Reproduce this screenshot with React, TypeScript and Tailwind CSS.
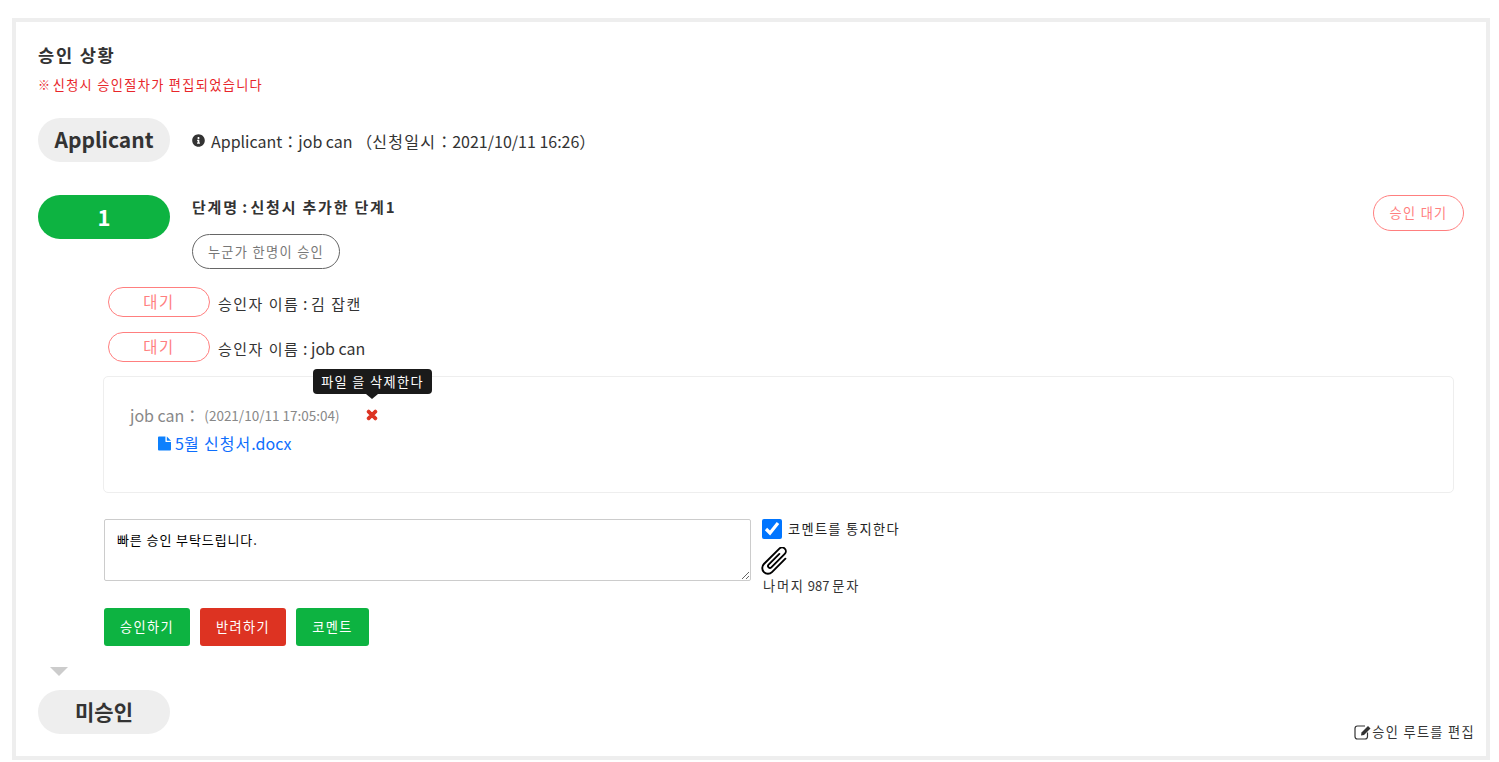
import { FaInfoCircle, FaTimes } from 'react-icons/fa'

const FONT = '[font-family:"Noto_Sans_CJK_KR","Noto_Sans",sans-serif]'

// hangul in the shot is drawn wider than latin, so hangul runs get their own size and spacing
function Ko({ text, className = 'text-[1.1em] tracking-[0.1em]' }: { text: string; className?: string }) {
  return (
    <>
      {text.split(/([가-힣]+(?:\s+[가-힣]+)*)/).map((part, i) =>
        i % 2 === 1 ? <span key={i} className={className}>{part}</span> : part
      )}
    </>
  )
}

function Approver({ name, last }: { name: string; last?: boolean }) {
  return (
    <div className={`flex items-start ${last ? 'h-[37px]' : 'h-[45px]'}`}>
      <span className="flex h-[30px] w-[102px] items-center justify-center rounded-[15px] border border-[#ff7f7f] pb-[2px] text-sm text-[#ff7f7f]">
        <Ko text="대기" />
      </span>
      <span className="ml-[8px] mt-[4px] text-base leading-[24px] text-[#333]">
        <Ko text="승인자 이름" className="text-[15px] tracking-[0.1em]" /> : <Ko text={name} className="text-[15px] tracking-[0.1em]" />
      </span>
    </div>
  )
}

function ClipIcon() {
  return (
    <svg viewBox="0 0 30 28" className="ml-[-2px] mt-[8px] h-[28px] w-[30px]">
      <g transform="translate(15 14) rotate(45) scale(0.95) translate(-6 -17.5)" fill="none" stroke="#000" strokeWidth={2} strokeLinecap="round">
        <path d="M12 8 V28 a6 6 0 0 1 -12 0 V5 a4 4 0 0 1 8 0 V25 a2 2 0 0 1 -4 0 V9" />
      </g>
    </svg>
  )
}

function EditIcon() {
  return (
    <svg viewBox="0 0 18 16" className="h-[16px] w-[18px]">
      <path d="M11 2 H3.5 Q1 2 1 4.5 V12.5 Q1 15 3.5 15 H11 Q13.5 15 13.5 12.5 V8.5" fill="none" stroke="#333" strokeWidth={1.2} />
      <path d="M7.5 8.5 L14 2 L16.5 4.5 L10 11 L7 11.5 Z" fill="#333" />
    </svg>
  )
}

export default function App() {
  return (
    <div className={`${FONT} h-[762px] overflow-hidden bg-white pl-[12px] pt-[18px]`}>
      <div className="relative h-[742px] w-[1478px] border-4 border-[#eee] bg-white pl-[22px] pt-[19px]">
        <h2 className="text-base leading-[28px] font-bold text-[#333]"><Ko text="승인 상황" /></h2>
        <p className="mt-[7px] text-xs leading-[18px] text-[#e8262a]"><Ko text="※ 신청시 승인절차가 편집되었습니다" /></p>

        <div className="mt-[24px] flex h-[44px] items-center">
          <span className="flex h-[44px] w-[132px] items-center justify-center rounded-[22px] bg-[#eee] text-[21px] font-bold text-[#333]">
            Applicant
          </span>
          <span className="ml-[22px] mt-[1px] flex items-center text-base text-[#333]">
            <FaInfoCircle className="mr-[6px] size-[13px]" />
            <span>
              Applicant：job can （<Ko text="신청일시" className="tracking-[0.08em]" />：2021/10/11 16:26）
            </span>
          </span>
        </div>

        <div className="relative mt-[33px] flex">
          <span className="flex h-[44px] w-[132px] items-center justify-center rounded-[22px] bg-[#0db341] pb-[2px] text-[22px] font-bold text-white">
            1
          </span>
          <div className="ml-[22px]">
            <p className="text-[15px] leading-[24px] font-bold text-[#333]">
              <Ko text="단계명" className="tracking-[0.12em]" /> : <Ko text="신청시 추가한 단계" className="tracking-[0.12em]" />1
            </p>
            <span className="mt-[15px] flex h-[35px] w-[148px] items-center justify-center rounded-[18px] border border-[#666] text-xs text-[#777]">
              <Ko text="누군가 한명이 승인" />
            </span>
          </div>
          <span className="absolute right-[22px] top-0 flex h-[36px] w-[91px] items-center justify-center rounded-[18px] border border-[#ff7f7f] text-xs text-[#ff7f7f]">
            <Ko text="승인 대기" />
          </span>
        </div>

        <div className="mt-[18px] pl-[70px]">
          <Approver name="김 잡캔" />
          <Approver name="job can" last />
        </div>

        <div className="relative ml-[65px] mt-[7px] h-[117px] w-[1351px] rounded-[5px] border border-[#eee] pl-[26px] pt-[26px]">
          <div className="flex items-center leading-[24px] text-[#888]">
            <span className="text-base">job can：</span>
            <span className="ml-[4px] text-[13.5px]">(2021/10/11 17:05:04)</span>
            <FaTimes className="ml-[26px] size-[14px] text-[#dd3322]" strokeWidth={40} stroke="currentColor" />
          </div>
          <a className="ml-[28px] mt-[4px] flex items-center text-base leading-[24px] text-[#0d6efd]">
            <svg viewBox="0 0 14 15" className="mr-[4px] h-[15px] w-[13px] fill-[#0d80fd]">
              <path d="M0 1 Q0 0 1 0 H8 V5 Q8 6 9 6 H14 V14 Q14 15 13 15 H1 Q0 15 0 14 Z" />
              <path d="M9.5 0 L14 4.5 H9.5 Z" />
            </svg>
            <span>
              <Ko text="5월 신청서" className="tracking-[0.06em]" />.docx
            </span>
          </a>
          <div className="absolute left-[209px] top-[-8px] flex h-[25px] w-[119px] items-center justify-center rounded-[4px] bg-[#1a1a1a] text-xs text-white">
            <Ko text="파일 을 삭제한다" />
            <span className="absolute bottom-[-5px] left-[53px] size-0 border-x-[6px] border-t-[5px] border-x-transparent border-t-[#1a1a1a]" />
          </div>
        </div>

        <div className="ml-[66px] mt-[26px] flex items-start">
          <textarea
            className="h-[62px] w-[647px] rounded-[2px] border border-[#ccc] px-[12px] py-[10px] text-[13px] leading-[20px] tracking-[0.9px] text-black"
            defaultValue="빠른 승인 부탁드립니다."
          />
          <div className="ml-[11px]">
            <label className="flex h-[20px] items-center text-xs text-[#222]">
              <input type="checkbox" defaultChecked className="mr-[6px] size-[20px] accent-[#0075ff]" />
              <Ko text="코멘트를 통지한다" />
            </label>
            <ClipIcon />
            <p className="mt-[2px] pl-[1px] text-[13px] leading-[18px] text-[#333]">
              <Ko text="나머지" className="text-[13.2px] tracking-[1.8px]" /> 987 <Ko text="문자" className="text-[13.2px] tracking-[1.8px]" />
            </p>
          </div>
        </div>

        <div className="ml-[66px] mt-[13px] flex gap-[10px]">
          <button className="h-[38px] w-[86px] rounded-[3px] bg-[#0db341] text-xs text-white"><Ko text="승인하기" /></button>
          <button className="h-[38px] w-[86px] rounded-[3px] bg-[#dd3322] text-xs text-white"><Ko text="반려하기" /></button>
          <button className="h-[38px] w-[73px] rounded-[3px] bg-[#0db341] text-xs text-white"><Ko text="코멘트" /></button>
        </div>

        <div className="ml-[12px] mt-[21px] size-0 border-x-[9px] border-t-[9px] border-x-transparent border-t-[#ccc]" />
        <span className="mt-[14px] flex h-[44px] w-[132px] items-center justify-center rounded-[22px] bg-[#eee] text-[21px] font-bold text-[#333]">
          미승인
        </span>

        <div className="absolute bottom-[14px] right-[11px] flex items-center text-xs leading-[20px] text-[#333]">
          <EditIcon />
          <Ko text="승인 루트를 편집" />
        </div>
      </div>
    </div>
  )
}
